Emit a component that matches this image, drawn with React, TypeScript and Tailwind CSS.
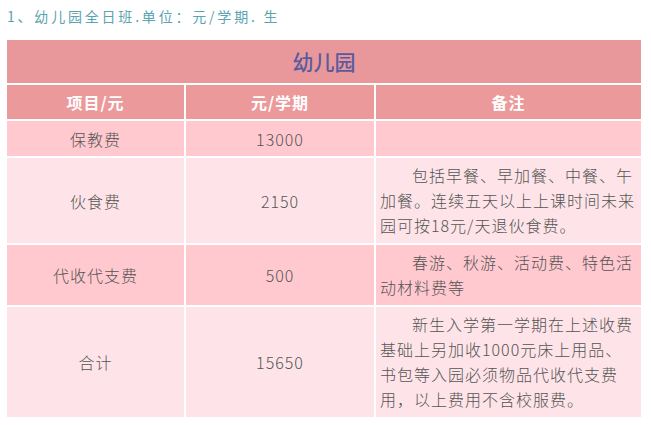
const rows = [
  { item: "保教费", amount: "13000", note: "", bg: "bg-[#ffc9cf]" },
  {
    item: "伙食费",
    amount: "2150",
    note: "包括早餐、早加餐、中餐、午加餐。连续五天以上上课时间未来园可按18元/天退伙食费。",
    bg: "bg-[#fee4e8]",
  },
  {
    item: "代收代支费",
    amount: "500",
    note: "春游、秋游、活动费、特色活动材料费等",
    bg: "bg-[#ffc9cf]",
  },
  {
    item: "合计",
    amount: "15650",
    note: "新生入学第一学期在上述收费基础上另加收1000元床上用品、书包等入园必须物品代收代支费用，以上费用不含校服费。",
    bg: "bg-[#fee4e8]",
  },
];

export default function App() {
  return (
    <div className="w-[651px] h-[425px] bg-white px-[7px] font-['Noto_Sans_CJK_SC','Noto_Sans',sans-serif] overflow-hidden">
      <p className="h-[33px] leading-[33px] text-[14px] tracking-[2.8px] text-[#5aa3b0]">
        1、幼儿园全日班.单位：元/学期. 生
      </p>

      <div className="mt-[7px] w-[634px] grid grid-cols-[177px_188px_265px] gap-[2px] bg-white">
        <div className="col-span-3 h-[43px] flex items-center justify-center bg-[#e8989b] text-[21px] font-medium text-[#5b5a9f]">
          幼儿园
        </div>

        {["项目/元", "元/学期", "备注"].map((h) => (
          <div
            key={h}
            className="h-[34px] flex items-center justify-center bg-[#ec999c] text-[16px] font-bold tracking-[1px] text-white"
          >
            {h}
          </div>
        ))}

        {rows.map((r) => (
          <div key={r.item} className="contents">
            <div className={`${r.bg} flex items-center justify-center text-[16px] font-light tracking-[1px] text-[#555]`}>
              {r.item}
            </div>
            <div className={`${r.bg} flex items-center justify-center text-[16px] font-light tracking-[1px] text-[#555]`}>
              {r.amount}
            </div>
            <div className={`${r.bg} min-h-[35px] py-[5px] pl-[4px] pr-[2px] text-[16px] font-light leading-[25px] tracking-[1px] text-[#555] indent-8`}>
              {r.note}
            </div>
          </div>
        ))}
      </div>
    </div>
  );
}
